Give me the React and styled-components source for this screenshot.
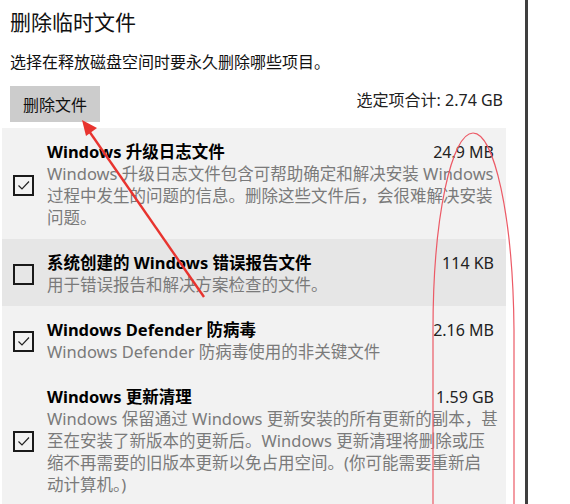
import React from 'react';
import styled, { createGlobalStyle } from 'styled-components';

const GlobalStyle = createGlobalStyle`
  html, body {
    margin: 0;
    padding: 0;
    background: #ffffff;
    overflow: hidden;
  }
  body {
    font-family: "Noto Sans", "Noto Sans CJK SC", sans-serif;
    color: #000000;
  }
`;

const items = [
  {
    title: 'Windows 升级日志文件',
    size: '24.9 MB',
    checked: true,
    lines: [
      'Windows 升级日志文件包含可帮助确定和解决安装 Windows',
      '过程中发生的问题的信息。删除这些文件后，会很难解决安装',
      '问题。',
    ],
  },
  {
    title: '系统创建的 Windows 错误报告文件',
    size: '114 KB',
    checked: false,
    selected: true,
    lines: ['用于错误报告和解决方案检查的文件。'],
  },
  {
    title: 'Windows Defender 防病毒',
    size: '2.16 MB',
    checked: true,
    lines: ['Windows Defender 防病毒使用的非关键文件'],
  },
  {
    title: 'Windows 更新清理',
    size: '1.59 GB',
    checked: true,
    lines: [
      'Windows 保留通过 Windows 更新安装的所有更新的副本，甚',
      '至在安装了新版本的更新后。Windows 更新清理将删除或压',
      '缩不再需要的旧版本更新以免占用空间。(你可能需要重新启',
      '动计算机。)',
    ],
  },
];

export default function App() {
  return (
    <>
      <GlobalStyle />
      <Page>
        <Main>
          <Title>删除临时文件</Title>
          <Subtitle>选择在释放磁盘空间时要永久删除哪些项目。</Subtitle>
          <ActionRow>
            <DeleteButton>删除文件</DeleteButton>
            <Total>选定项合计: 2.74 GB</Total>
          </ActionRow>
          <List>
            {items.map((item) => (
              <Item key={item.title} $selected={item.selected}>
                <CheckBox>
                  {item.checked && (
                    <svg width="17" height="17" viewBox="0 0 17 17">
                      <polyline
                        points="3.5,8.5 7,12 14,4.5"
                        fill="none"
                        stroke="#222"
                        strokeWidth="1.2"
                      />
                    </svg>
                  )}
                </CheckBox>
                <ItemBody>
                  <ItemHead>
                    <ItemTitle>{item.title}</ItemTitle>
                    <ItemSize>{item.size}</ItemSize>
                  </ItemHead>
                  <ItemDesc>
                    {item.lines.map((line, i) => (
                      <div key={i}>{line}</div>
                    ))}
                  </ItemDesc>
                </ItemBody>
              </Item>
            ))}
          </List>
        </Main>
        <Divider />
        <Blank />
      </Page>
      <Overlay width="570" height="504" viewBox="0 0 570 504">
        <line x1="204" y1="297" x2="89" y2="131" stroke="#e8342f" strokeWidth="2.4" />
        <polygon points="82,120 97,128 86,136" fill="#e8342f" />
        <path
          d="M433 504 L433 330 C433 215 452 133 473 133 C494 133 513 215 514 330 L514 504"
          fill="none"
          stroke="#ec5a66"
          strokeWidth="1.2"
        />
      </Overlay>
    </>
  );
}

const Page = styled.div`
  display: flex;
  height: 504px;
  width: 570px;
  overflow: hidden;
`;

const Main = styled.div`
  width: 525px;
  flex-shrink: 0;
  box-sizing: border-box;
  padding: 0 19px 0 10px;
  display: flex;
  flex-direction: column;
`;

const Title = styled.h1`
  margin: 8px 0 0;
  font-size: 21px;
  line-height: 28px;
  font-weight: 400;
  color: #111;
`;

const Subtitle = styled.p`
  margin: 15px 0 0;
  font-size: 16px;
  line-height: 22px;
  color: #111;
`;

const ActionRow = styled.div`
  margin-top: 13px;
  display: flex;
  justify-content: space-between;
  align-items: flex-start;
`;

const DeleteButton = styled.button`
  height: 36px;
  width: 90px;
  padding: 0;
  border: none;
  background: #cccccc;
  font-family: inherit;
  font-size: 16px;
  color: #111;
`;

const Total = styled.div`
  margin: 3px 3px 0 0;
  font-size: 16px;
  line-height: 22px;
  color: #222;
`;

const List = styled.div`
  margin: 6px 0 0 -8px;
  background: #f2f2f2;
  flex: 1;
`;

const Item = styled.div`
  display: flex;
  align-items: center;
  padding: 13px 12px 10px 11px;
  background: ${(p) => (p.$selected ? '#e6e6e6' : 'transparent')};
`;

const CheckBox = styled.div`
  width: 21px;
  height: 21px;
  box-sizing: border-box;
  border: 2px solid #1a1a1a;
  margin-right: 13px;
  flex-shrink: 0;
  display: flex;
  align-items: center;
  justify-content: center;
`;

const ItemBody = styled.div`
  flex: 1;
  min-width: 0;
`;

const ItemHead = styled.div`
  display: flex;
  justify-content: space-between;
  line-height: 22px;
`;

const ItemTitle = styled.div`
  font-size: 16.5px;
  font-weight: 700;
  color: #000;
`;

const ItemSize = styled.div`
  font-size: 16px;
  color: #222;
`;

const ItemDesc = styled.div`
  font-size: 16.5px;
  line-height: 22px;
  color: #7a7a7a;
  white-space: nowrap;
`;

const Divider = styled.div`
  width: 3px;
  flex-shrink: 0;
  background: #3f3f3f;
`;

const Blank = styled.div`
  flex: 1;
  background: #ffffff;
`;

const Overlay = styled.svg`
  position: absolute;
  left: 0;
  top: 0;
  pointer-events: none;
`;
